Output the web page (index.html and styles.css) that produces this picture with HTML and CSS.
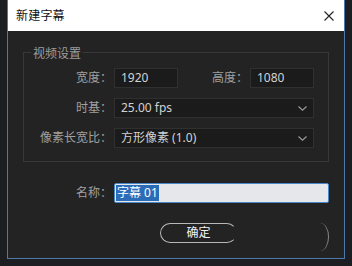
FILE: index.html
```html
<!DOCTYPE html>
<html>
<head>
	<meta charset="utf-8">
	<title>新建字幕</title>
	<link rel="stylesheet" href="styles.css">
</head>
<body>
	<div class="dlg">
		<div class="dlgHead">
			<span class="dlgTitle">新建字幕</span>
			<svg class="dlgClose" width="12" height="10" viewBox="0 0 12 10">
				<path d="M1.5 0.5 L10.5 9.5 M10.5 0.5 L1.5 9.5" stroke="#222" stroke-width="1.1" fill="none"/>
			</svg>
		</div>
		<div class="dlgBody">
			<fieldset class="group">
				<legend>视频设置</legend>
				<div class="row">
					<label class="lbl">宽度：</label>
					<div class="field small">1920</div>
					<label class="lbl lbl-2">高度：</label>
					<div class="field small">1080</div>
				</div>
				<div class="row">
					<label class="lbl">时基：</label>
					<div class="field select">
						<span>25.00 fps</span>
						<svg class="arrow" width="9" height="5" viewBox="0 0 9 5"><path d="M0.5 0.5 L4.5 4.2 L8.5 0.5" stroke="#9a9a9a" stroke-width="1.2" fill="none"/></svg>
					</div>
				</div>
				<div class="row">
					<label class="lbl">像素长宽比：</label>
					<div class="field select">
						<span>方形像素 (1.0)</span>
						<svg class="arrow" width="9" height="5" viewBox="0 0 9 5"><path d="M0.5 0.5 L4.5 4.2 L8.5 0.5" stroke="#9a9a9a" stroke-width="1.2" fill="none"/></svg>
					</div>
				</div>
			</fieldset>
			<div class="row nameRow">
				<label class="lbl">名称：</label>
				<div class="nameInput"><span class="sel">字幕 01</span></div>
			</div>
			<div class="btnRow">
				<div class="btn">确定</div>
				<div class="arc"></div>
			</div>
		</div>
	</div>
</body>
</html>
```

FILE: styles.css
```css
*{
	margin: 0px;
	padding: 0px;
	box-sizing: border-box;
}
body{
	background: #1c1e21;
	font: 400 12px/16px "Noto Sans", "Noto Sans CJK SC", sans-serif;
	color: #a8a8a8;
	width: 352px;
	height: 266px;
	overflow: hidden;
}
.dlg{
	margin-left: 7px;
	width: 338px;
	border: 1px solid #4b79a8;
	border-top: 0;
}
.dlgHead{
	height: 31px;
	background: #fff;
	display: flex;
	align-items: center;
	justify-content: space-between;
	padding: 0 9px 0 8px;
}
.dlgTitle{
	color: #111;
	font-size: 12px;
	letter-spacing: 0.2px;
}
.dlgClose{
	display: block;
}
.dlgBody{
	height: 227px;
	background: #232323;
	padding: 11px 15px 0 15px;
}
.group{
	border: 1px solid #383838;
	padding: 6px 14px 13px 0;
	width: 306px;
}
.group legend{
	margin-left: 7px;
	padding: 4px 2px 0 2px;
	line-height: 16px;
	color: #9c9c9c;
	font-size: 12px;
}
.row{
	display: flex;
	align-items: center;
	height: 20px;
	margin-bottom: 10px;
}
.group .row:last-child{
	margin-bottom: 0;
}
.lbl{
	width: 89px;
	padding-right: 1px;
	text-align: right;
	color: #a0a0a0;
	margin-right: 1px;
	white-space: nowrap;
}
.lbl-2{
	width: 71px;
}
.field{
	height: 20px;
	background: #1b1b1b;
	border: 1px solid #303030;
	color: #d2d2d2;
	padding: 0 6px;
	display: flex;
	align-items: center;
}
.small{
	width: 64px;
}
.select{
	flex: 1;
	justify-content: space-between;
	padding-right: 6px;
}
.arrow{
	display: block;
}
.nameRow{
	margin-top: 21px;
	margin-bottom: 0;
	padding-left: 0;
}
.nameRow .lbl{
	width: 90px;
}
.nameInput{
	width: 215px;
	height: 20px;
	background: #e5e7eb;
	border: 1px solid #4a87c6;
	border-radius: 2px;
	padding: 1px 0 1px 1px;
	display: flex;
	align-items: center;
}
.sel{
	background: #2a6cb8;
	color: #fff;
	line-height: 16px;
	padding: 0 1px;
}
.btnRow{
	display: flex;
	align-items: flex-start;
	margin-top: 20px;
	padding-left: 137px;
}
.btn{
	width: 78px;
	height: 20px;
	border: 1px solid #b8b8b8;
	border-right-color: transparent;
	border-radius: 10px;
	color: #f2f2f2;
	text-align: center;
	line-height: 18px;
}
.arc{
	margin-left: 74px;
	width: 18px;
	height: 28px;
	border-right: 1px solid #8a8a8a;
	border-radius: 50%;
}
```
